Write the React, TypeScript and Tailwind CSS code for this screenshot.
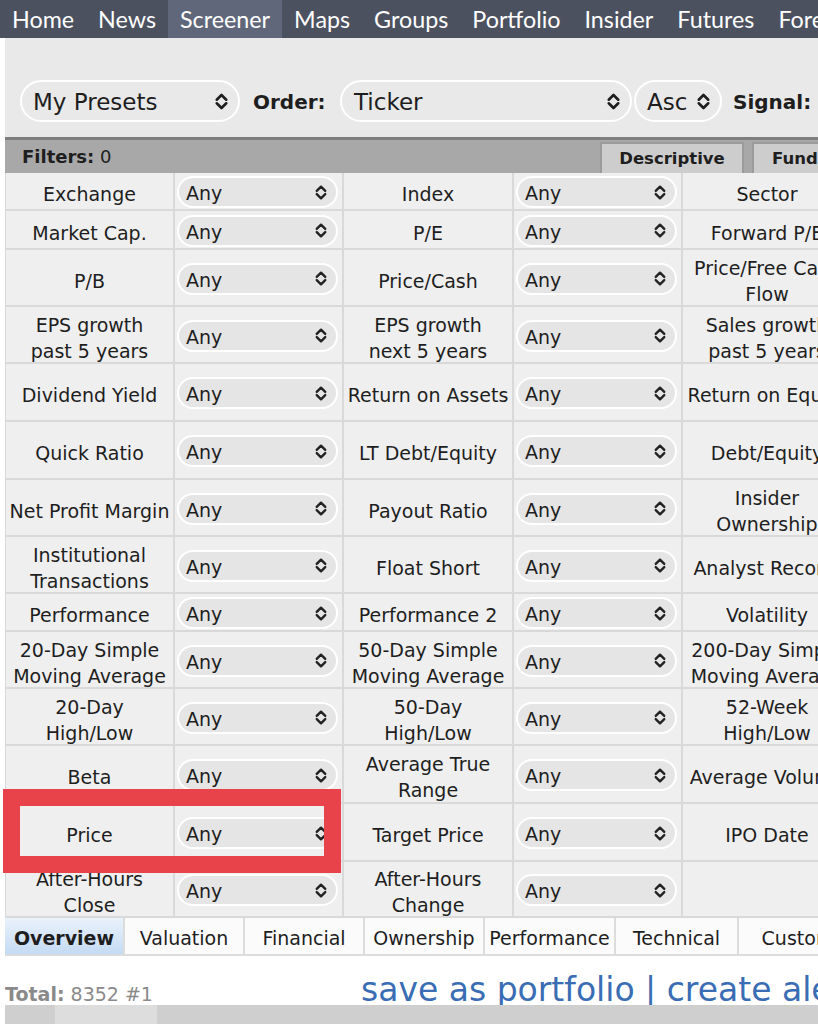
import React from 'react';

const nav = ['Home', 'News', 'Screener', 'Maps', 'Groups', 'Portfolio', 'Insider', 'Futures', 'Forex'];

// label / label / label per row, plus the row height (border included)
const rows = [
  { h: 'h-[38px]', a: 'Exchange', b: 'Index', c: 'Sector' },
  { h: 'h-[39px]', a: 'Market Cap.', b: 'P/E', c: 'Forward P/E' },
  { h: 'h-[57px]', a: 'P/B', b: 'Price/Cash', c: 'Price/Free Cash\nFlow' },
  { h: 'h-[57px]', a: 'EPS growth\npast 5 years', b: 'EPS growth\nnext 5 years', c: 'Sales growth\npast 5 years' },
  { h: 'h-[58px]', a: 'Dividend Yield', b: 'Return on Assets', c: 'Return on Equity' },
  { h: 'h-[58px]', a: 'Quick Ratio', b: 'LT Debt/Equity', c: 'Debt/Equity' },
  { h: 'h-[57px]', a: 'Net Profit Margin', b: 'Payout Ratio', c: 'Insider\nOwnership' },
  { h: 'h-[57px]', a: 'Institutional\nTransactions', b: 'Float Short', c: 'Analyst Recom.' },
  { h: 'h-[38px]', a: 'Performance', b: 'Performance 2', c: 'Volatility' },
  { h: 'h-[57px]', a: '20-Day Simple\nMoving Average', b: '50-Day Simple\nMoving Average', c: '200-Day Simple\nMoving Average' },
  { h: 'h-[57px]', a: '20-Day\nHigh/Low', b: '50-Day\nHigh/Low', c: '52-Week\nHigh/Low' },
  { h: 'h-[58px]', a: 'Beta', b: 'Average True\nRange', c: 'Average Volume' },
  { h: 'h-[58px]', a: 'Price', b: 'Target Price', c: 'IPO Date' },
  { h: 'h-[56px]', a: 'After-Hours\nClose', b: 'After-Hours\nChange', c: '' },
];

const tabs = [
  { name: 'Overview', w: 'w-[120px]' },
  { name: 'Valuation', w: 'w-[120px]' },
  { name: 'Financial', w: 'w-[120px]' },
  { name: 'Ownership', w: 'w-[120px]' },
  { name: 'Performance', w: 'w-[131px]' },
  { name: 'Technical', w: 'w-[123px]' },
  { name: 'Custom', w: 'w-[120px]' },
];

function UpDown({ className }: { className?: string }) {
  return (
    <svg viewBox="0 0 12 16" className={className} fill="none" stroke="currentColor" strokeWidth="2.2" strokeLinecap="round" strokeLinejoin="round">
      <path d="M2 6.5L6 2.5L10 6.5M2 9.5L6 13.5L10 9.5" />
    </svg>
  );
}

function Label({ text }: { text: string }) {
  return (
    <div className="flex items-center justify-center overflow-hidden whitespace-pre text-center px-[2px] pt-[6px] leading-[26px] border-r-2 border-b-2 border-[#d9d9d9]">
      {text}
    </div>
  );
}

function AnySelect() {
  return (
    <div className="flex items-center pt-[2px] border-r-2 border-b-2 border-[#d9d9d9]">
      <div className="ml-[2px] w-[161px] h-[32px] rounded-full border-2 border-white bg-[#e5e5e5] flex items-center justify-between pl-[7px] pr-[8px]">
        <span className="pt-[3px]">Any</span>
        <UpDown className="w-[14px] h-[17px] text-[#222]" />
      </div>
    </div>
  );
}

export default function App() {
  return (
    <div className="relative w-[818px] h-[1024px] overflow-hidden bg-white text-[#1e1e1e]" style={{ fontFamily: '"DejaVu Sans", Verdana, sans-serif' }}>
      {/* Top nav */}
      <div className="flex h-[38px] bg-[#4c5160] text-white whitespace-nowrap" style={{ fontFamily: 'Lato, sans-serif' }}>
        {nav.map((n) => (
          <div key={n} className={`px-[12px] flex items-center text-[23.3px] ${n === 'Screener' ? 'bg-[#61677a]' : ''}`}>
            {n}
          </div>
        ))}
      </div>

      <div className="pl-[5px]">
        {/* Presets */}
        <div className="h-[99px] bg-[#e9e9e9] pt-[42px] pl-[15px] flex items-start whitespace-nowrap">
          <div className="w-[220px] h-[42px] rounded-full border-2 border-white flex items-center justify-between pl-[11px] pr-[9px] text-[23px]">
            <span className="pt-[2px]">My Presets</span>
            <UpDown className="w-[15px] h-[19px]" />
          </div>
          <div className="ml-[13px] h-[42px] pt-[2px] flex items-center text-[20px] font-bold w-[74px]">Order:</div>
          <div className="ml-[13px] w-[292px] h-[42px] rounded-full border-2 border-white flex items-center justify-between pl-[12px] pr-[9px] text-[23px]">
            <span className="pt-[2px]">Ticker</span>
            <UpDown className="w-[15px] h-[19px]" />
          </div>
          <div className="ml-[2px] w-[88px] h-[42px] rounded-full border-2 border-white flex items-center justify-between pl-[11px] pr-[9px] text-[23px]">
            <span className="pt-[2px]">Asc</span>
            <UpDown className="w-[15px] h-[19px]" />
          </div>
          <div className="ml-[11px] h-[42px] pt-[2px] flex items-center text-[20px] font-bold">Signal:</div>
        </div>

        {/* Filters bar */}
        <div className="h-[36px] border-t-[3px] border-[#7e7e7e] bg-[#a8a8a8] flex items-end whitespace-nowrap">
          <div className="ml-[17px] self-center text-[18px]">
            <span className="font-bold">Filters:</span> 0
          </div>
          <div className="ml-auto flex gap-[8px]">
            <div className="w-[144px] h-[31px] pt-[1px] bg-[#cdcdcd] border-2 border-b-0 border-[#9b9b9b] flex items-center justify-center font-bold text-[16.5px]">
              Descriptive
            </div>
            <div className="w-[140px] h-[31px] pt-[1px] bg-[#cdcdcd] border-2 border-b-0 border-[#9b9b9b] flex items-center pl-[18px] font-bold text-[16.5px] mr-[-74px]">
              Fundamental
            </div>
          </div>
        </div>

        {/* Filter table */}
        <div className="text-[19px] bg-[#efefef] border-l border-[#d9d9d9] w-[1100px]">
          {rows.map((r, i) => (
            <div key={i} className={`grid grid-cols-[169px_169px_170px_169px_170px_169px] ${r.h}`}>
              <Label text={r.a} />
              <AnySelect />
              <Label text={r.b} />
              <AnySelect />
              <Label text={r.c} />
              {r.c ? <AnySelect /> : <Label text="" />}
            </div>
          ))}
        </div>

        {/* View tabs */}
        <div className="flex h-[38px] text-[19px] border-b-2 border-[#dcdcdc] whitespace-nowrap">
          {tabs.map((t) => (
            <div
              key={t.name}
              className={`${t.w} shrink-0 flex items-center justify-center pt-[4px] border-r-2 border-[#dcdcdc] ${
                t.name === 'Overview' ? 'font-bold bg-gradient-to-b from-[#eaf2fb] to-[#c4dbf3]' : 'bg-[#fbfbfb]'
              }`}
            >
              {t.name}
            </div>
          ))}
        </div>

        {/* Total + links */}
        <div className="h-[49px] flex items-end whitespace-nowrap">
          <div className="shrink-0 text-[19px] text-[#8a8a8a] leading-[22px] w-[356px]">
            <span className="font-bold">Total:</span> 8352 #1
          </div>
          <div className="shrink-0 text-[33px] text-[#3a6db4] leading-[34px] mb-[-2px]">
            save as portfolio | create alert
          </div>
        </div>
        <div className="relative h-[20px] bg-[#cfcfcf] flex">
          <div className="ml-[50px] w-[102px] bg-[#dddddd]" />
        </div>
      </div>

      {/* highlight */}
      <div className="absolute left-[3px] top-[789px] w-[338px] h-[84px] border-[17px] border-[#e8424b]" />
    </div>
  );
}
